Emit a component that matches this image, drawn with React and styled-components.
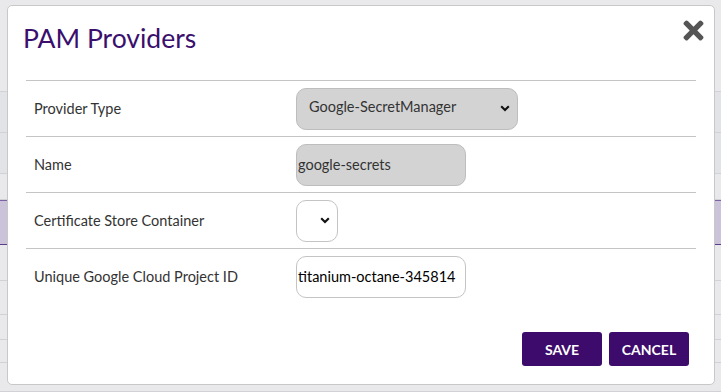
import React from 'react';
import styled, { createGlobalStyle } from 'styled-components';
import { FaTimes } from 'react-icons/fa';

const GlobalStyle = createGlobalStyle`
  html, body {
    margin: 0;
    padding: 0;
    width: 721px;
    height: 392px;
    overflow: hidden;
    background: #e9e9eb;
    font-family: Lato, "Open Sans", sans-serif;
  }
`;

const Backdrop = styled.div`
  display: flex;
  flex-direction: column;
  height: 392px;
`;

const BackRow = styled.div`
  height: ${({ h }) => h}px;
  flex: none;
  box-sizing: border-box;
  background: ${({ tone }) => (tone === 'dark' ? '#e2e3e6' : tone === 'purple' ? '#cbc3d9' : 'transparent')};
  border-bottom: 1px solid ${({ tone }) => (tone === 'purple' ? '#5b3b8c' : '#d2d2d6')};
  border-top: ${({ tone }) => (tone === 'purple' ? '1px solid #7d62a6' : 'none')};
`;

const Modal = styled.div`
  position: absolute;
  left: 7px;
  top: 5px;
  width: 708px;
  height: 380px;
  box-sizing: border-box;
  background: #fff;
  border: 1px solid #c8c8c8;
  border-radius: 5px;
  padding: 14px 18px 0 18px;
  display: flex;
  flex-direction: column;
`;

const Title = styled.h2`
  margin: 0 0 0 -3px;
  font-size: 26.5px;
  line-height: 36px;
  font-weight: 400;
  color: #3a0f6d;
  height: 60px;
`;

const CloseButton = styled.button`
  position: absolute;
  top: 10px;
  right: 6px;
  border: none;
  background: none;
  padding: 0;
  color: #555;
  font-size: 29px;
  display: flex;
  cursor: pointer;
`;

const Table = styled.div`
  display: flex;
  flex-direction: column;
`;

const Row = styled.div`
  display: grid;
  grid-template-columns: 270px 1fr;
  align-items: center;
  height: 56px;
  box-sizing: border-box;
  border-top: 1px solid #c4c4c4;
`;

const Label = styled.div`
  padding-left: 8px;
  font-size: 14.5px;
  color: #333;
`;

const SelectBox = styled.div`
  width: ${({ w }) => w}px;
  height: 42px;
  box-sizing: border-box;
  border: 1px solid ${({ disabled }) => (disabled ? '#bdbdbd' : '#c4c4c4')};
  border-radius: 10px;
  background: ${({ disabled }) => (disabled ? '#d3d3d3' : '#fff')};
  display: flex;
  align-items: center;
  padding: 0 7px 3px 12px;
  font-size: 14.5px;
  color: #333;
  line-height: 1;
`;

const Chevron = styled.svg`
  width: 10px;
  height: 7px;
  flex: none;
  margin-left: auto;
  margin-top: 2px;
`;

const TextInput = styled.input`
  width: 170px;
  height: 42px;
  box-sizing: border-box;
  border: 1px solid ${({ disabled }) => (disabled ? '#bdbdbd' : '#c4c4c4')};
  border-radius: 10px;
  background: ${({ disabled }) => (disabled ? '#d3d3d3' : '#fff')};
  padding: 0 1px;
  font-family: Lato, "Open Sans", sans-serif;
  font-size: 14.5px;
  color: ${({ disabled }) => (disabled ? '#333' : '#000')};
  outline: none;
`;

const Footer = styled.div`
  display: flex;
  justify-content: flex-end;
  gap: 7px;
  margin-top: 28px;
  padding-right: 7px;
`;

const Button = styled.button`
  width: 80px;
  height: 34px;
  border: none;
  border-radius: 3px;
  background: #3c0b6c;
  color: #fff;
  font-family: Lato, "Open Sans", sans-serif;
  font-weight: 700;
  font-size: 14px;
  text-transform: uppercase;
  cursor: pointer;
`;

const ChevronIcon = () => (
  <Chevron viewBox="0 0 10 7">
    <path d="M1.2 1.2 L5 5 L8.8 1.2" fill="none" stroke="#111" strokeWidth="2.1" />
  </Chevron>
);

const backRows = [
  { h: 92 },
  { h: 41, tone: 'dark' },
  { h: 41, tone: 'dark' },
  { h: 26 },
  { h: 45, tone: 'purple' },
  { h: 36 },
  { h: 34 },
  { h: 25 },
  { h: 23 },
  { h: 29 },
];

export default function App() {
  return (
    <>
      <GlobalStyle />
      <Backdrop>
        {backRows.map((r, i) => (
          <BackRow key={i} h={r.h} tone={r.tone} />
        ))}
      </Backdrop>
      <Modal>
        <Title>PAM Providers</Title>
        <CloseButton aria-label="Close">
          <FaTimes />
        </CloseButton>
        <Table>
          <Row>
            <Label>Provider Type</Label>
            <SelectBox w={222} disabled>
              Google-SecretManager
              <ChevronIcon />
            </SelectBox>
          </Row>
          <Row>
            <Label>Name</Label>
            <TextInput disabled value="google-secrets" readOnly />
          </Row>
          <Row>
            <Label>Certificate Store Container</Label>
            <SelectBox w={42}>
              <ChevronIcon />
            </SelectBox>
          </Row>
          <Row>
            <Label>Unique Google Cloud Project ID</Label>
            <TextInput value="titanium-octane-345814" readOnly />
          </Row>
        </Table>
        <Footer>
          <Button>Save</Button>
          <Button>Cancel</Button>
        </Footer>
      </Modal>
    </>
  );
}
